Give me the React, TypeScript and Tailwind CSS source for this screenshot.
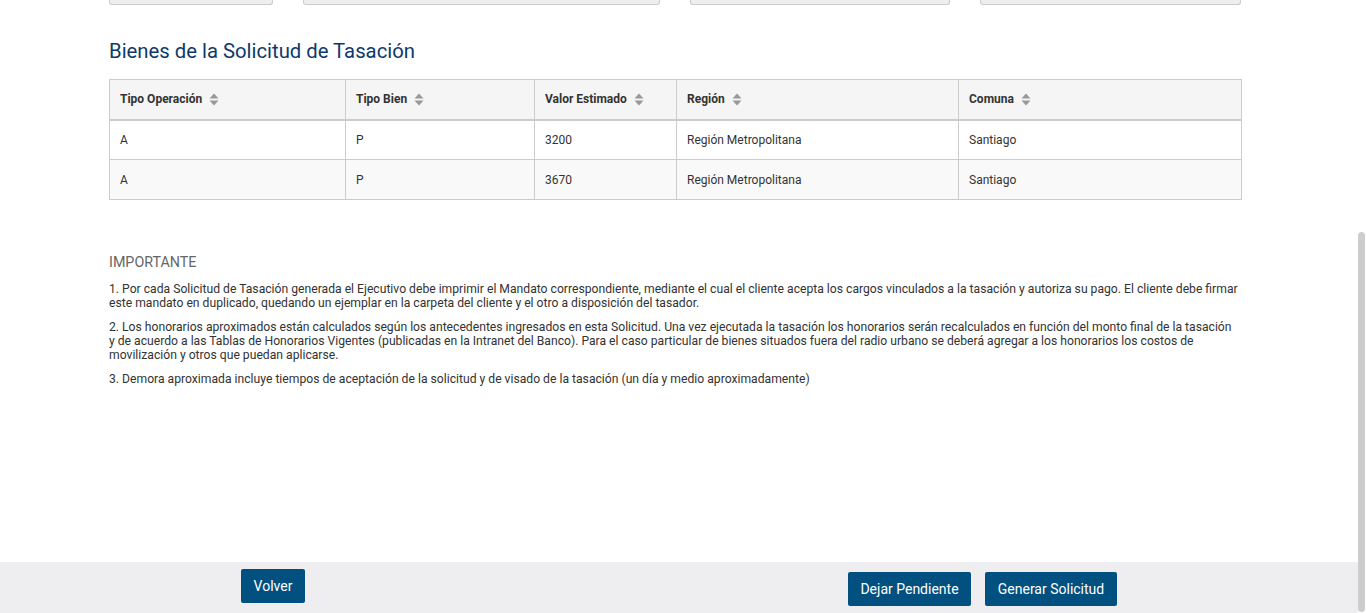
import * as React from "react";

type Bien = {
  tipoOperacion: string;
  tipoBien: string;
  valor: string;
  region: string;
  comuna: string;
};

const columns = [
  { label: "Tipo Operación", width: "w-[236px]" },
  { label: "Tipo Bien", width: "w-[189px]" },
  { label: "Valor Estimado", width: "w-[142px]" },
  { label: "Región", width: "w-[282px]" },
  { label: "Comuna", width: "w-[283px]" },
];

const bienes: Bien[] = [
  { tipoOperacion: "A", tipoBien: "P", valor: "3200", region: "Región Metropolitana", comuna: "Santiago" },
  { tipoOperacion: "A", tipoBien: "P", valor: "3670", region: "Región Metropolitana", comuna: "Santiago" },
];

const notas = [
  "1. Por cada Solicitud de Tasación generada el Ejecutivo debe imprimir el Mandato correspondiente, mediante el cual el cliente acepta los cargos vinculados a la tasación y autoriza su pago. El cliente debe firmar este mandato en duplicado, quedando un ejemplar en la carpeta del cliente y el otro a disposición del tasador.",
  "2. Los honorarios aproximados están calculados según los antecedentes ingresados en esta Solicitud. Una vez ejecutada la tasación los honorarios serán recalculados en función del monto final de la tasación y de acuerdo a las Tablas de Honorarios Vigentes (publicadas en la Intranet del Banco). Para el caso particular de bienes situados fuera del radio urbano se deberá agregar a los honorarios los costos de movilización y otros que puedan aplicarse.",
  "3. Demora aproximada incluye tiempos de aceptación de la solicitud y de visado de la tasación (un día y medio aproximadamente)",
];

function SortIcon() {
  return (
    <svg width="10" height="13" viewBox="0 0 10 13" className="shrink-0">
      <path d="M5 0.5 L9.5 5.5 L0.5 5.5 Z" fill="#999999" />
      <path d="M5 12.5 L9.5 7.5 L0.5 7.5 Z" fill="#999999" />
    </svg>
  );
}

function InputStub({ className }: { className: string }) {
  return (
    <div
      className={
        "h-[5px] rounded-b-[3px] border border-t-0 border-[#cccccc] bg-[#eeeeee] " +
        className
      }
    />
  );
}

export default function App() {
  return (
    <div className="relative flex h-[613px] w-[1366px] flex-col overflow-hidden bg-white font-['Roboto','Liberation_Sans',sans-serif] text-[#333333]">
      <main className="flex-1 pl-[109px]">
        {/* remains of the form fields above */}
        <div className="flex w-[1132px]">
          <InputStub className="w-[164px]" />
          <InputStub className="ml-[30px] w-[357px]" />
          <InputStub className="ml-[30px] w-[260px]" />
          <InputStub className="ml-[30px] w-[261px]" />
        </div>

        <h2 className="mt-[34px] text-[20.3px] leading-[24px] font-normal text-[#0d3a6a]">
          Bienes de la Solicitud de Tasación
        </h2>

        <table className="mt-[16px] w-[1132px] table-fixed border-collapse border border-[#cccccc] text-[12px]">
          <thead>
            <tr className="bg-[#f5f5f5]">
              {columns.map((c) => (
                <th
                  key={c.label}
                  className={
                    "h-[40px] border-x border-b-2 border-[#cccccc] px-[10px] text-left font-bold " +
                    c.width
                  }>
                  <span className="flex items-center gap-[7px]">
                    {c.label}
                    <SortIcon />
                  </span>
                </th>
              ))}
            </tr>
          </thead>
          <tbody>
            {bienes.map((b, i) => (
              <tr key={i} className={i % 2 === 1 ? "bg-[#f9f9f9]" : "bg-white"}>
                {[b.tipoOperacion, b.tipoBien, b.valor, b.region, b.comuna].map((v, j) => (
                  <td key={j} className="h-[40px] border border-[#cccccc] px-[10px]">
                    {v}
                  </td>
                ))}
              </tr>
            ))}
          </tbody>
        </table>

        <div className="mt-[52px] w-[1130px]">
          <div className="text-[14.3px] leading-[20px] text-[#666666]">IMPORTANTE</div>
          <div className="mt-[10px] space-y-[10px] text-[12.17px] leading-[14px] text-[#333333]">
            {notas.map((n) => (
              <p key={n}>{n}</p>
            ))}
          </div>
        </div>
      </main>

      <footer className="flex h-[51px] w-[1358px] shrink-0 items-start bg-[#eeeef0] pl-[241px]">
        <button
          type="button"
          className="mt-[7px] h-[34px] w-[64px] rounded-[2px] bg-[#01507f] text-[14px] text-white">
          Volver
        </button>
        <div className="mt-[10px] ml-[543px] flex gap-[14px]">
          <button
            type="button"
            className="h-[34px] w-[123px] rounded-[2px] bg-[#01507f] text-[14px] text-white">
            Dejar Pendiente
          </button>
          <button
            type="button"
            className="h-[34px] w-[132px] rounded-[2px] bg-[#01507f] text-[14px] text-white">
            Generar Solicitud
          </button>
        </div>
      </footer>

      {/* scrollbar thumb */}
      <div className="absolute top-[232px] left-[1358px] h-[380px] w-[7px] rounded-full bg-[#cdcdcd]" />
    </div>
  );
}
